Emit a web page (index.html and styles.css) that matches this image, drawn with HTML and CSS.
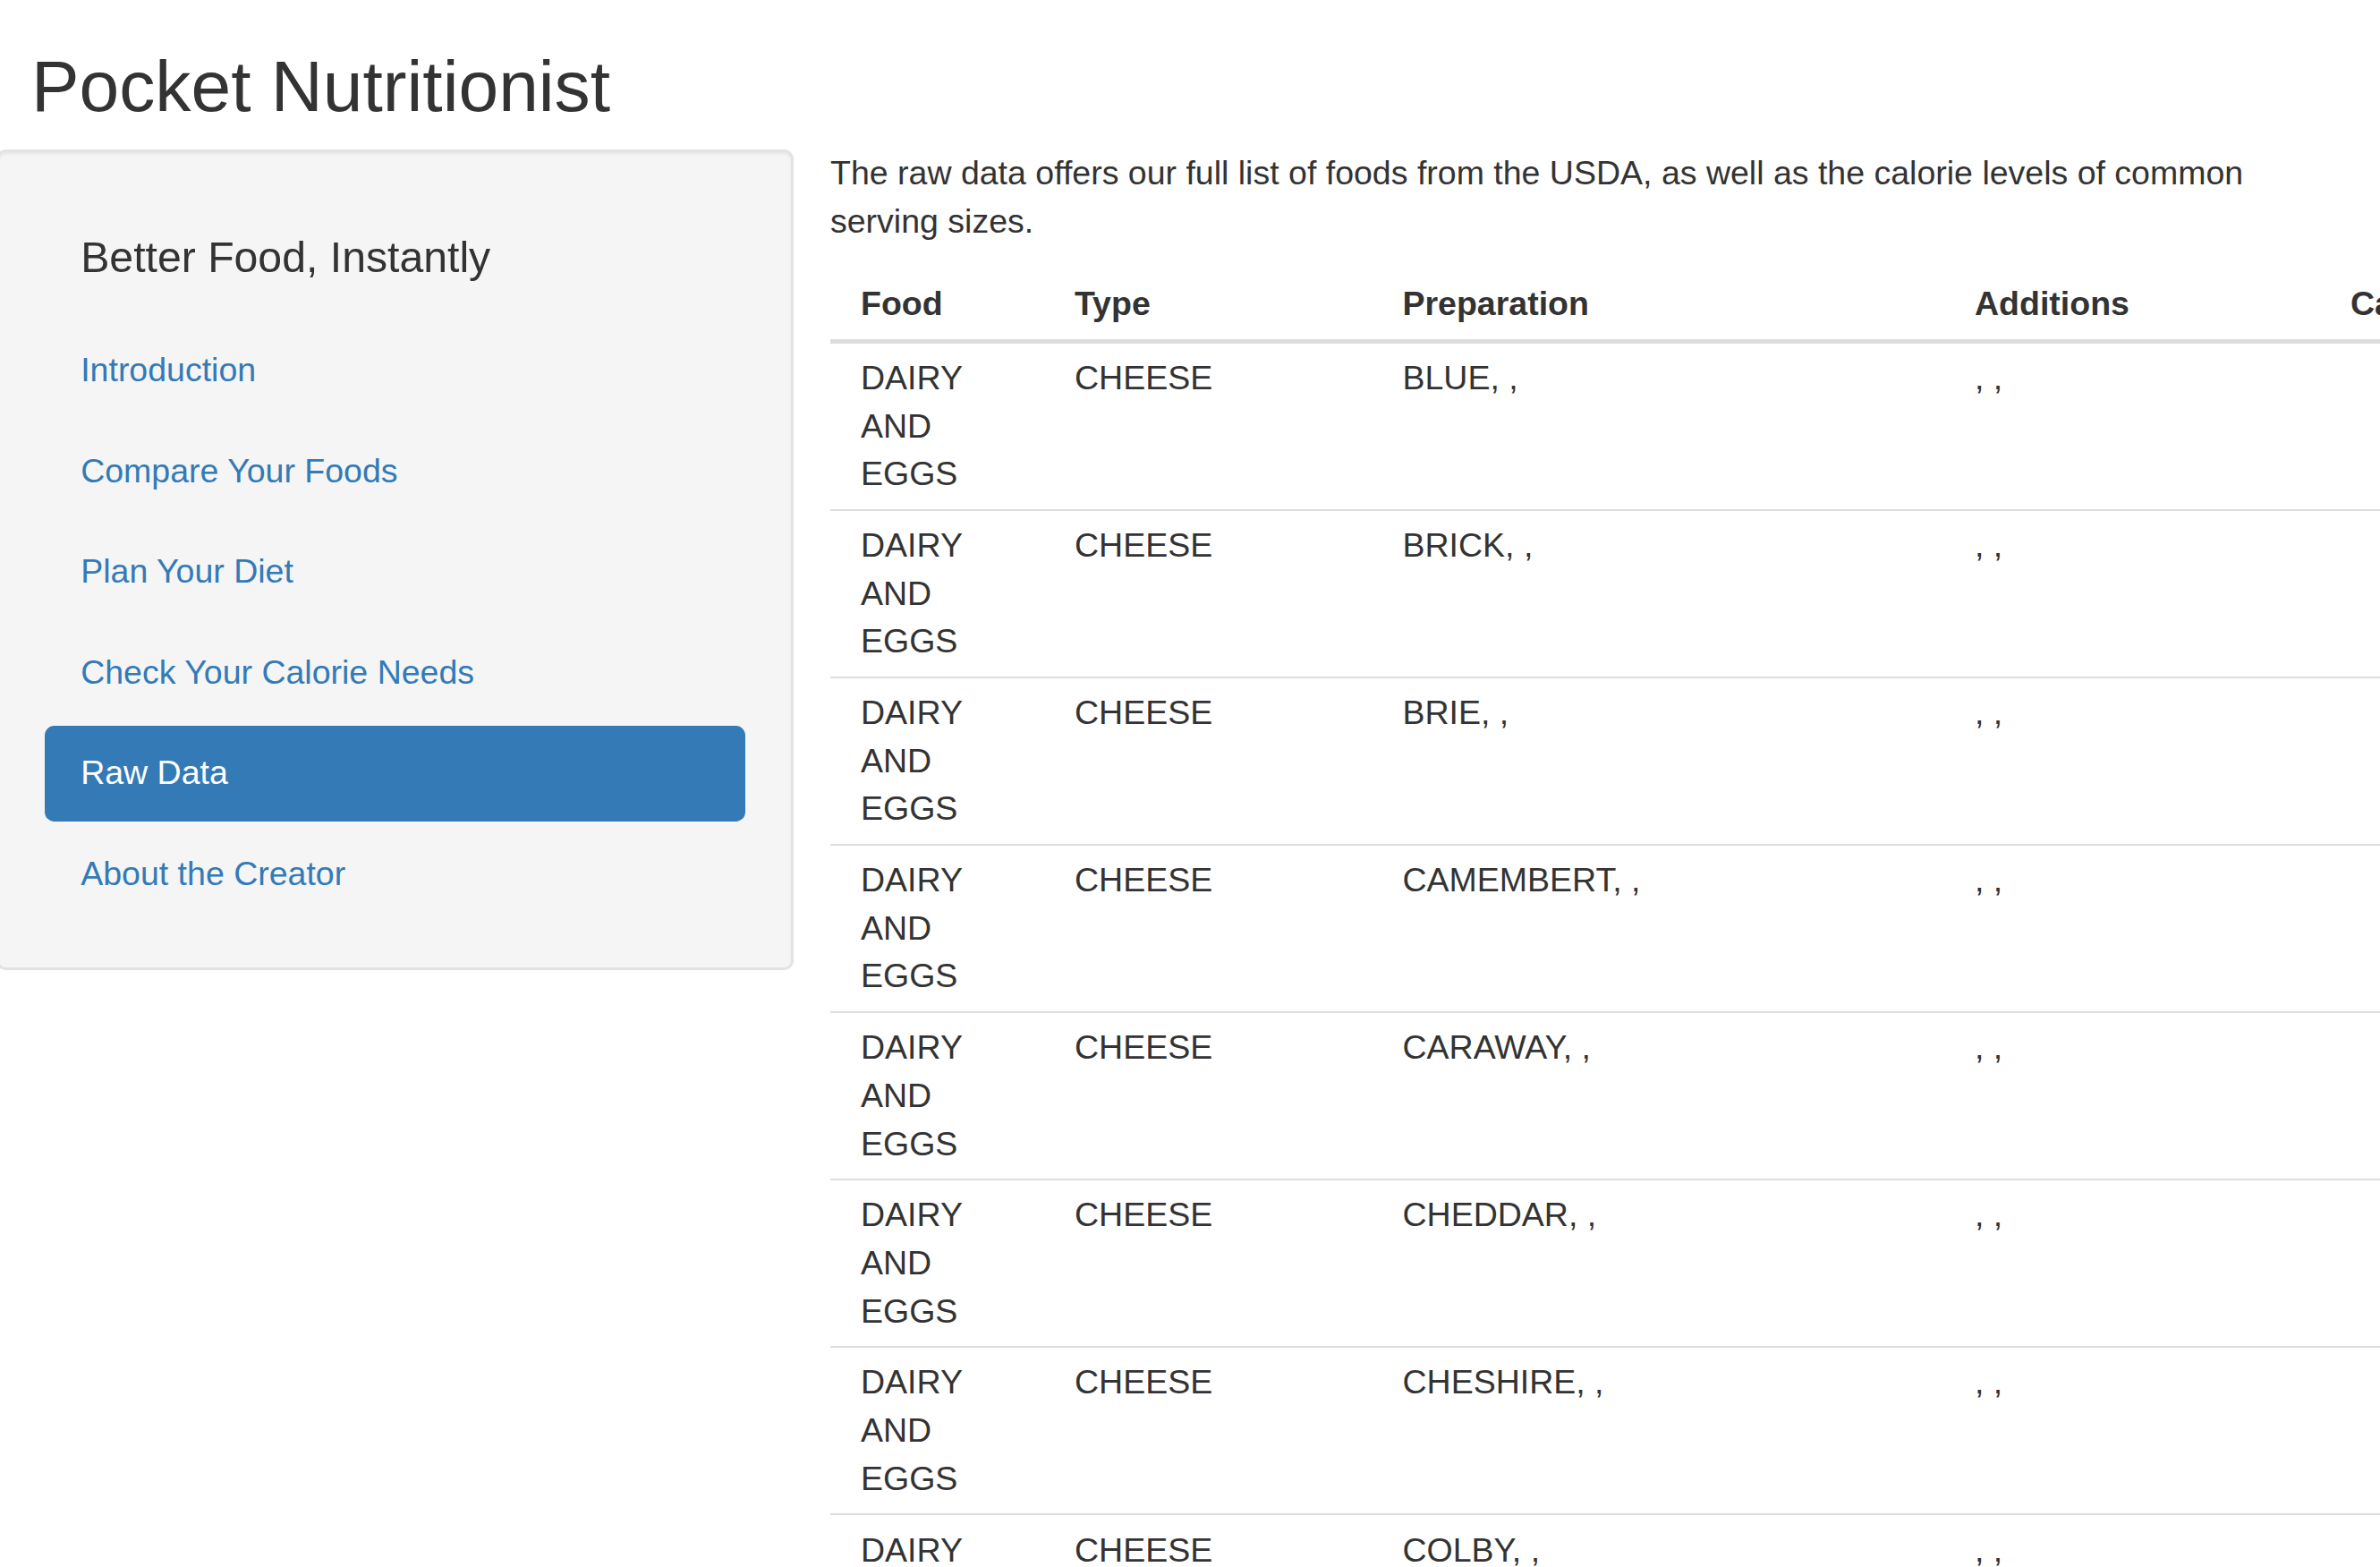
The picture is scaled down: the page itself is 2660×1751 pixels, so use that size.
FILE: index.html
```html
<!DOCTYPE html>
<html lang="en">
<head>
<meta charset="utf-8">
<title>Pocket Nutritionist</title>
<link rel="stylesheet" href="styles.css">
</head>
<body>
<div class="page">
  <h2 class="title">Pocket Nutritionist</h2>
  <div class="layout">
    <div class="sidebar well">
      <ul class="nav">
        <li class="brand">Better Food, Instantly</li>
        <li><a href="#">Introduction</a></li>
        <li><a href="#">Compare Your Foods</a></li>
        <li><a href="#">Plan Your Diet</a></li>
        <li><a href="#">Check Your Calorie Needs</a></li>
        <li class="active"><a href="#">Raw Data</a></li>
        <li><a href="#">About the Creator</a></li>
      </ul>
    </div>
    <div class="main">
      <p class="intro">The raw data offers our full list of foods from the USDA, as well as the calorie levels of common serving sizes.</p>
      <table class="data">
        <colgroup>
          <col class="c-food"><col class="c-type"><col class="c-prep"><col class="c-add"><col class="c-cal">
        </colgroup>
        <thead>
          <tr><th>Food</th><th>Type</th><th>Preparation</th><th>Additions</th><th>Calories</th></tr>
        </thead>
        <tbody>
          <tr><td>DAIRY AND EGGS</td><td>CHEESE</td><td>BLUE, ,</td><td>, ,</td><td class="num">353</td></tr>
          <tr><td>DAIRY AND EGGS</td><td>CHEESE</td><td>BRICK, ,</td><td>, ,</td><td class="num">371</td></tr>
          <tr><td>DAIRY AND EGGS</td><td>CHEESE</td><td>BRIE, ,</td><td>, ,</td><td class="num">334</td></tr>
          <tr><td>DAIRY AND EGGS</td><td>CHEESE</td><td>CAMEMBERT, ,</td><td>, ,</td><td class="num">300</td></tr>
          <tr><td>DAIRY AND EGGS</td><td>CHEESE</td><td>CARAWAY, ,</td><td>, ,</td><td class="num">376</td></tr>
          <tr><td>DAIRY AND EGGS</td><td>CHEESE</td><td>CHEDDAR, ,</td><td>, ,</td><td class="num">403</td></tr>
          <tr><td>DAIRY AND EGGS</td><td>CHEESE</td><td>CHESHIRE, ,</td><td>, ,</td><td class="num">387</td></tr>
          <tr><td>DAIRY AND EGGS</td><td>CHEESE</td><td>COLBY, ,</td><td>, ,</td><td class="num">394</td></tr>
          <tr><td>DAIRY AND EGGS</td><td>CHEESE</td><td>COTTAGE, CREAMED, LARGE OR SMALL CURD</td><td>, ,</td><td class="num">98</td></tr>
        </tbody>
      </table>
    </div>
  </div>
</div>
</body>
</html>
```
FILE: styles.css
```css
html, body {
  margin: 0;
  padding: 0;
  overflow: hidden;
  background: #fff;
}
body {
  width: 2660px;
  height: 1751px;
  font-family: "Liberation Sans", Arial, Helvetica, sans-serif;
  font-size: 37.5px;
  line-height: 53.6px;
  color: #333;
}
.page {
  width: 2660px;
}
.title {
  margin: 52px 0 26.8px 35px;
  font-size: 80.3px;
  font-weight: 500;
  line-height: 88.3px;
  color: #333;
}
.layout {
  display: flex;
  align-items: flex-start;
}
.well {
  flex: 0 0 auto;
  box-sizing: border-box;
  width: 891px;
  margin-left: -4px;
  padding: 51px;
  background: #f5f5f5;
  border: 3px solid #e3e3e3;
  border-radius: 10.7px;
  box-shadow: inset 0 2.7px 2.7px rgba(0, 0, 0, 0.05);
}
.nav {
  list-style: none;
  margin: 0;
  padding: 0;
}
.nav li + li {
  margin-top: 5.35px;
}
.nav .brand {
  box-sizing: border-box;
  height: 134px;
  padding: 40.2px;
  font-size: 48.2px;
  line-height: 53.6px;
  color: #333;
}
.nav a {
  display: block;
  padding: 26.8px 40.2px;
  line-height: 53.6px;
  border-radius: 10.7px;
  color: #337ab7;
  text-decoration: none;
}
.nav .active a {
  background: #337ab7;
  color: #fff;
}
.main {
  flex: 0 0 1650px;
  width: 1650px;
  min-width: 0;
  margin-left: 41px;
}
.intro {
  margin: 0 0 26.8px;
}
.data {
  table-layout: fixed;
  width: 2164px;
  border-collapse: separate;
  border-spacing: 0;
}
.c-food { width: 239px; }
.c-type { width: 366.5px; }
.c-prep { width: 639.5px; }
.c-add { width: 420px; }
.c-cal { width: 499px; }
.data th {
  text-align: left;
  font-weight: bold;
  vertical-align: bottom;
  padding: 12px 31px 12px 34px;
  line-height: 53.6px;
  border-bottom: 5.35px solid #ddd;
}
.data td {
  vertical-align: top;
  padding: 12.4px 31px 11.9px 34px;
  line-height: 53.6px;
  border-top: 2.68px solid #ddd;
}
.data tbody tr:first-child td {
  border-top: 0;
}
.data td.num {
  text-align: right;
}
```
